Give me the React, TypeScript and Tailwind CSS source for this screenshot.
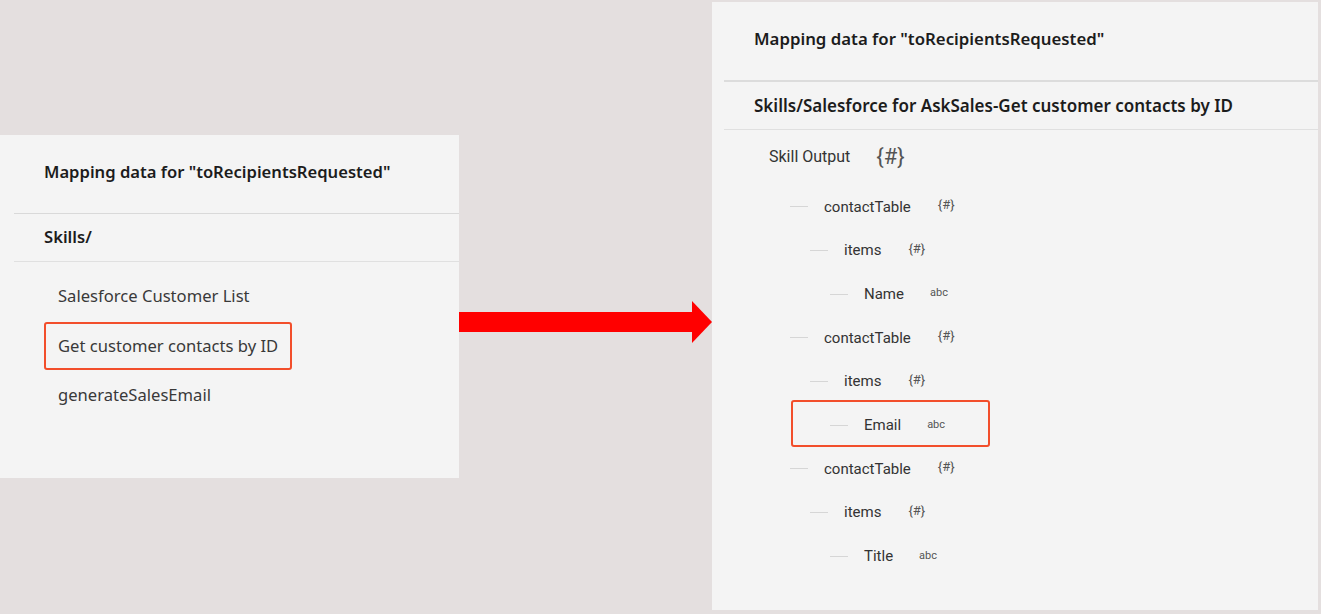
import React from "react";

const font = { fontFamily: '"Noto Sans", "Liberation Sans", sans-serif' };
const roboto = { fontFamily: 'Roboto, "Noto Sans", sans-serif' };

function Dash() {
  return <span className="inline-block w-[18px] h-px bg-[#d6d6d6] mr-[16px]" />;
}

type Row = { label: string; level: number; kind: "obj" | "abc"; boxed?: boolean };

const rows: Row[] = [
  { label: "contactTable", level: 1, kind: "obj" },
  { label: "items", level: 2, kind: "obj" },
  { label: "Name", level: 3, kind: "abc" },
  { label: "contactTable", level: 1, kind: "obj" },
  { label: "items", level: 2, kind: "obj" },
  { label: "Email", level: 3, kind: "abc", boxed: true },
  { label: "contactTable", level: 1, kind: "obj" },
  { label: "items", level: 2, kind: "obj" },
  { label: "Title", level: 3, kind: "abc" },
];

function TreeRow({ r }: { r: Row }) {
  const pad = r.level === 1 ? "pl-[78px]" : r.level === 2 ? "pl-[98px]" : "pl-[118px]";
  return (
    <div className={`relative h-[43.7px] flex items-center ${pad}`}>
      {r.boxed && (
        <div className="absolute left-[79px] top-[-3px] w-[199px] h-[47px] border-2 border-[#f24e2b] rounded-[3px]" />
      )}
      <Dash />
      <span className="text-[15px] text-[#333333]" style={roboto}>
        {r.label}
      </span>
      {r.kind === "obj" ? (
        <span className="ml-[27px] -mt-[4px] text-[13px] text-[#555555]" style={roboto}>
          {"{#}"}
        </span>
      ) : (
        <span className="ml-[26px] -mt-[1px] text-[11px] text-[#555555]" style={roboto}>
          abc
        </span>
      )}
    </div>
  );
}

export default function App() {
  return (
    <div className="w-[1321px] h-[614px] bg-[#e4dfdf] flex items-start overflow-hidden" style={font}>
      {/* Left panel */}
      <div className="mt-[135px] w-[459px] h-[343px] bg-[#f4f4f4] shrink-0">
        <div className="h-[78px] pt-[25px] pl-[44px] text-[16.6px] leading-[24px] font-semibold text-[#1c1c1c]">
          Mapping data for "toRecipientsRequested"
        </div>
        <div className="ml-[14px] h-px bg-[#d9d9d9]" />
        <div className="h-[47px] pl-[44px] flex items-center text-[16.6px] font-semibold text-[#1c1c1c]">Skills/</div>
        <div className="ml-[14px] h-px bg-[#e0e0e0]" />
        <div className="pt-[10px] flex flex-col">
          <div className="h-[49.5px] pl-[58px] flex items-center text-[16.6px] text-[#393939]">
            Salesforce Customer List
          </div>
          <div className="h-[49.5px] pl-[44px] flex items-center">
            <div className="w-[248px] h-[48px] border-2 border-[#f24e2b] rounded-[3px] pl-[12px] flex items-center text-[16.6px] text-[#393939]">
              Get customer contacts by ID
            </div>
          </div>
          <div className="h-[49.5px] pl-[58px] flex items-center text-[16.6px] text-[#393939]">generateSalesEmail</div>
        </div>
      </div>

      {/* Arrow */}
      <svg className="mt-[301px] shrink-0" width="253" height="42" viewBox="0 0 253 42">
        <rect x="0" y="11" width="234" height="20" fill="#ff0000" />
        <polygon points="233,0 253,21 233,42" fill="#ff0000" />
      </svg>

      {/* Right panel */}
      <div className="mt-[2px] w-[606px] h-[608px] bg-[#f4f4f4] shrink-0">
        <div className="h-[78px] pt-[25px] pl-[42px] text-[16.8px] leading-[24px] font-semibold text-[#1c1c1c]">
          Mapping data for "toRecipientsRequested"
        </div>
        <div className="ml-[12px] h-[2px] bg-[#dcdcdc]" />
        <div className="h-[47px] pl-[42px] flex items-center text-[17px] font-semibold text-[#1c1c1c]">
          Skills/Salesforce for AskSales-Get customer contacts by ID
        </div>
        <div className="ml-[12px] h-px bg-[#e0e0e0]" />
        <div className="h-[54px] pl-[57px] flex items-center">
          <span className="text-[16px] text-[#333333]" style={roboto}>Skill Output</span>
          <span className="ml-[26px] -mt-[2px] text-[22px] text-[#555555]" style={roboto}>
            {"{#}"}
          </span>
        </div>
        <div className="pt-[1px]">
          {rows.map((r, i) => (
            <TreeRow key={i} r={r} />
          ))}
        </div>
      </div>
    </div>
  );
}
